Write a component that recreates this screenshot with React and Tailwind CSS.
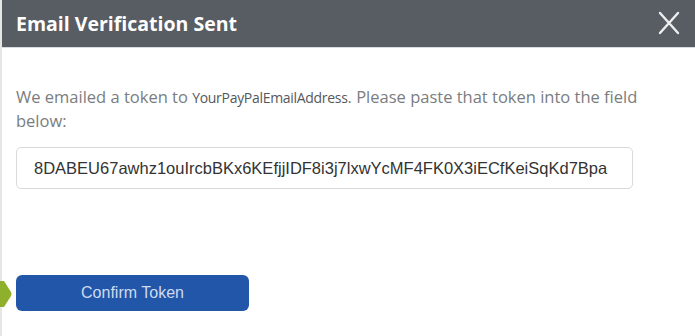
import React from 'react';

export default function App() {
  return (
    <div className="w-[695px] h-[336px] bg-white overflow-hidden relative font-['Open_Sans',sans-serif]">
      <div className="h-full border-l-2 border-[#e6e6e6] flex flex-col">
        <div className="h-[48px] bg-[#575d62] border-b border-[#d9dcde] flex items-center justify-between pl-[14px] pr-[15px] shrink-0">
          <h1 className="text-[19.5px] font-bold text-white">Email Verification Sent</h1>
          <svg width="22" height="24" viewBox="0 0 22 24" className="mb-[2px]">
            <path d="M2 2 L20 22 M20 2 L2 22" stroke="#eceeef" strokeWidth="2.4" strokeLinecap="round" />
          </svg>
        </div>

        <div className="pl-[14px] pt-[37px] flex flex-col">
          <p className="w-[660px] text-[16.5px] leading-[23px] text-[#7a7d80]">
            We emailed a token to <span className="text-[#55585b] text-[14px] tracking-[-0.3px]">YourPayPalEmailAddress</span>. Please paste that token into the field below:
          </p>

          <div className="mt-[15px] w-[617px] h-[42px] border border-[#dadada] rounded-[5px] flex items-center pl-[17px] font-['Liberation_Sans',Arial,sans-serif] text-[16.5px] text-[#333]">
            8DABEU67awhz1ouIrcbBKx6KEfjjIDF8i3j7lxwYcMF4FK0X3iECfKeiSqKd7Bpa
          </div>

          <button className="mt-[86px] w-[233px] h-[36px] bg-[#2156a9] rounded-[6px] text-[#cfdbee] text-[16px] font-['Liberation_Sans',Arial,sans-serif]">
            Confirm Token
          </button>
        </div>
      </div>

      <svg width="12" height="26" viewBox="0 0 12 26" className="absolute left-0 top-[281px]">
        <path d="M0 0 L4 0 L11 11 Q12 13 11 15 L4 26 L0 26 Z" fill="#8fb02d" />
      </svg>
    </div>
  );
}
